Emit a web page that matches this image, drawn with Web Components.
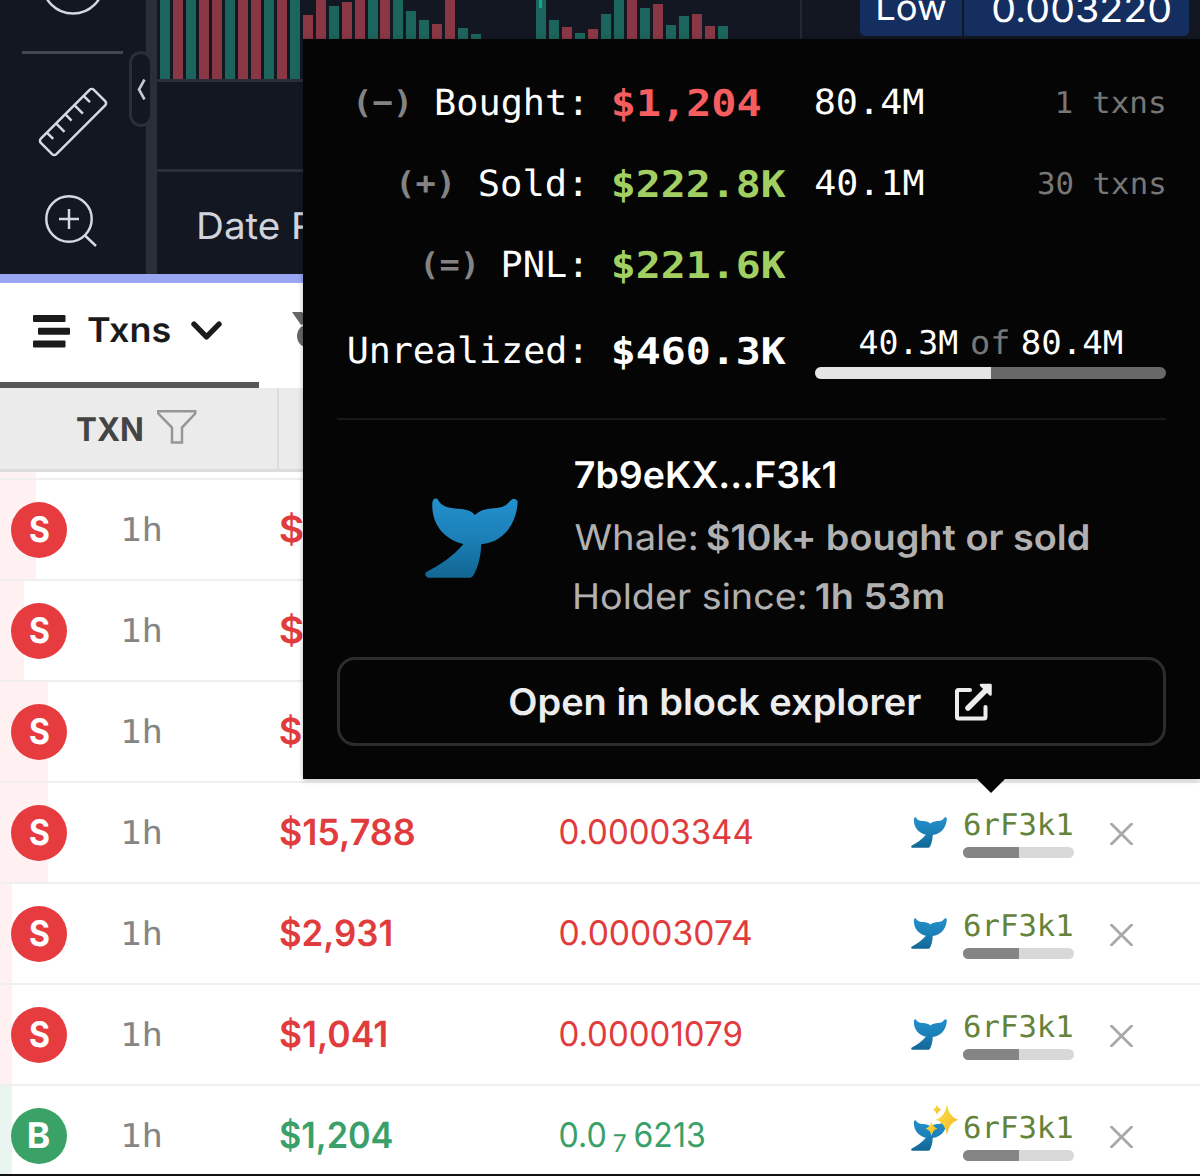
<!DOCTYPE html>
<html lang="en">
<head>
<meta charset="utf-8">
<title>Txns</title>
<style>
  html, body { margin: 0; }
  body { width: 1200px; height: 1176px; overflow: hidden; background: #fff; font-family: Inter, "Open Sans", sans-serif; }
</style>
</head>
<body>
<trade-page></trade-page>

<script>
const MONO = '"DejaVu Sans Mono", "Liberation Mono", monospace';
const ctx = document.createElement('canvas').getContext('2d');

// text sized by its cap height and drawn width
class InkText extends HTMLElement {
  connectedCallback() {
    if (this.shadowRoot) return;
    this.attachShadow({ mode: 'open' }).innerHTML = `
      <style>
        :host { display: block; flex: none; }
        span { display: block; width: max-content; white-space: pre; transform-origin: 0 0; text-rendering: geometricPrecision; }
      </style>
      <span><slot></slot></span>`;
    const cs = getComputedStyle(this);
    const cap = +this.getAttribute('cap');
    const w = +this.getAttribute('w');
    // measured large, glyph bounds are rounded to whole pixels
    ctx.font = `${cs.fontWeight} 400px ${cs.fontFamily}`;
    const size = cap / (ctx.measureText('H').actualBoundingBoxAscent / 400);
    const k = size / 400;
    const m = ctx.measureText(this.textContent);
    const base = (cap + (m.fontBoundingBoxAscent - m.fontBoundingBoxDescent) * k) / 2;
    const span = this.shadowRoot.querySelector('span');
    this.style.width = w + 'px';
    this.style.height = cap + 'px';
    span.style.fontSize = size + 'px';
    span.style.lineHeight = cap + 'px';
    const drawn = span.getBoundingClientRect().width / m.width;
    const scale = w / ((m.actualBoundingBoxLeft + m.actualBoundingBoxRight) * drawn);
    span.style.transform = `translate(${m.actualBoundingBoxLeft * drawn * scale}px, ${cap - base}px) scaleX(${scale})`;
  }
}
customElements.define('ink-text', InkText);

class WhaleTail extends HTMLElement {
  connectedCallback() {
    this.attachShadow({ mode: 'open' }).innerHTML = `
      <style>
        :host { display: block; flex: none; }
        svg { display: block; width: 100%; height: 100%; overflow: visible; }
      </style>
      <svg viewBox="74 174 280 240" preserveAspectRatio="none">
        <defs>
          <linearGradient id="g" x1="0" y1="0" x2="0" y2="1">
            <stop offset="0" stop-color="#2490cc"/><stop offset=".5" stop-color="#1b80b7"/><stop offset="1" stop-color="#126693"/>
          </linearGradient>
          <linearGradient id="y" x1="0" y1="0" x2="1" y2="1">
            <stop offset="0" stop-color="#ffe34d"/><stop offset="1" stop-color="#efb51b"/>
          </linearGradient>
        </defs>
        <path fill="url(#g)" d="M96 190Q97 173 111 176C126 204 148 204 184 207Q213 210 224 225Q240 209 268 206C300 204 316 202 330 183Q344 169 353 184C352 235 322 306 243 313C243 350 232 385 222 402Q217 413 208 413H83Q69 405 78 396C118 376 160 348 190 312C135 300 93 255 96 190Z"/>
        ${this.hasAttribute('sparkle') ? `
          <g fill="url(#y)">
            <path d="M354 52Q366 150 442 173Q366 194 354 294Q339 194 268 173Q339 150 354 52Z"/>
            <path d="M234 184Q243 230 281 240Q243 250 234 298Q225 250 187 240Q225 230 234 184Z"/>
            <path d="M276 54Q283 84 309 94Q283 104 276 136Q269 104 243 94Q269 84 276 54Z"/>
          </g>` : ''}
      </svg>`;
  }
}
customElements.define('whale-tail', WhaleTail);

class HoldBar extends HTMLElement {
  connectedCallback() {
    this.attachShadow({ mode: 'open' }).innerHTML = `
      <style>
        :host { display: block; overflow: hidden; border-radius: 6px; background: var(--rest, #d8d8d8); }
        div { height: 100%; width: var(--held, 50.5%); background: var(--fill, #858585); }
      </style>
      <div></div>`;
  }
}
customElements.define('hold-bar', HoldBar);

class ToolBar extends HTMLElement {
  connectedCallback() {
    this.attachShadow({ mode: 'open' }).innerHTML = `
      <style>
        :host { display: flex; flex-direction: column; width: 146px; height: 274px; background: #131722; overflow: hidden; }
        svg { display: block; fill: none; stroke: #d5d8e2; stroke-width: 2.5; }
        hr { width: 101px; height: 3px; margin: 36px 0 0 22px; border: 0; background: #434651; }
        .ring { margin-left: 41px; }
        .ruler { margin: 33px 0 0 38px; }
        .zoom { margin: 37px 0 0 44px; }
      </style>
      <svg class="ring" width="64" height="15"><circle cx="32" cy="-17" r="30.5"/></svg>
      <hr>
      <svg class="ruler" width="70" height="70" viewBox="0 0 70 70">
        <g transform="rotate(-45 35 35)">
          <rect x="-2.5" y="24" width="75" height="22" rx="3"/>
          <path d="M9 24v9M22 24v12M35 24v9M48 24v12M61 24v9"/>
        </g>
      </svg>
      <svg class="zoom" width="54" height="54" viewBox="0 0 54 54">
        <circle cx="25" cy="25" r="22.7"/><path d="M15 25h20M25 15v20M41.5 42L52 52"/>
      </svg>`;
  }
}
customElements.define('tool-bar', ToolBar);

// volume bars: colour + top edge, "-" is an empty slot
const VOLUME = ('G0 R0 G0 R0 R0 G0 R0 R0 G0 R0 G0 R15 R0 G6 R2 R0 G0 R0 G0 G11 G20 R24 R0 G28 G34 - - - - ' +
  'G0 G20 R27 G33 R29 G14 G0 R0 G8 R4 G25 G16 R14 R26 G26').split(' ');

class PriceChart extends HTMLElement {
  connectedCallback() {
    this.attachShadow({ mode: 'open' }).innerHTML = `
      <style>
        :host { display: flex; flex-direction: column; flex: 1; height: 274px; background: #131722; color: #d1d4dc; position: relative; overflow: hidden; }
        .bars { display: flex; align-items: flex-end; gap: 2.97px; height: 79px; padding-left: 3px; border-bottom: 3px solid #2a2e39; box-sizing: content-box; }
        i { flex: none; width: 10px; }
        .G { background: #1c655c; }
        .R { background: #893744; }
        .blank { height: 87px; border-bottom: 3px solid #2a2e39; }
        .foot { display: flex; gap: 15px; padding: 40px 0 0 42px; }
        .low { position: absolute; left: 703px; top: 0; display: flex; gap: 2px; color: #fff; }
        .low div { height: 36px; background: #152e60; }
        .low div:first-child { width: 84px; padding-left: 18px; border-bottom-left-radius: 5px; }
        .low div:last-child { width: 196px; padding-left: 29px; border-bottom-right-radius: 5px; }
        .low ink-text { margin-top: -5px; }
        .grid { position: absolute; top: 0; left: 643px; width: 2px; height: 80px; background: #242833; }
        .tick { position: absolute; top: 0; left: 382px; width: 3px; height: 8px; background: #12a88a; }
      </style>
      <div class="bars">${VOLUME.map((v) => v === '-' ? '<i></i>'
        : `<i class="${v[0]}" style="height:${79 - v.slice(1)}px"></i>`).join('')}</div>
      <div class="blank"></div>
      <div class="foot"><ink-text cap="27" w="80">Date</ink-text><ink-text cap="27" w="117">Range</ink-text></div>
      <div class="grid"></div><div class="tick"></div>
      <div class="low">
        <div><ink-text cap="26" w="68">Low</ink-text></div>
        <div><ink-text cap="27" w="177">0.003220</ink-text></div>
      </div>`;
  }
}
customElements.define('price-chart', PriceChart);

class TxnTabs extends HTMLElement {
  connectedCallback() {
    this.attachShadow({ mode: 'open' }).innerHTML = `
      <style>
        :host { display: block; }
        .tabs { display: flex; height: 105px; background: #fff; color: #1b1b1b; }
        .tab { display: flex; align-items: center; box-sizing: border-box; width: 259px; padding: 0 0 3px 33px; border-bottom: 6px solid #575757; font-weight: 600; }
        .tab ink-text { margin: -1px 21px 0 18px; }
        .medal { margin: 29px 0 0 33px; }
        .head { display: flex; height: 81px; background: #ebebeb; border-bottom: 3px solid #dcdcdc; color: #444; font-weight: 700; }
        .cell { display: flex; align-items: center; gap: 15px; width: 200px; padding-left: 77px; border-right: 2px solid #dcdcdc; }
        .cell svg { margin-top: -2px; }
        svg { display: block; }
      </style>
      <div class="tabs">
        <div class="tab">
          <svg width="37" height="33" fill="#1b1b1b"><rect y="0" width="32.5" height="7" rx="1"/><rect x="5" y="12.7" width="32" height="7" rx="1"/><rect y="25.5" width="32.5" height="7" rx="1"/></svg>
          <ink-text cap="25" w="82">Txns</ink-text>
          <svg width="31" height="20" fill="none" stroke="#1b1b1b" stroke-width="5.4" stroke-linecap="round" stroke-linejoin="round"><path d="M3 3.2L15.5 15.8L28 3.2"/></svg>
        </div>
        <svg class="medal" width="36" height="36" fill="#676767"><path d="M0 0h10l8 10-9 3z"/><circle cx="17" cy="24" r="12"/><circle cx="17" cy="24" r="6" fill="#9a9a9a"/></svg>
      </div>
      <div class="head">
        <div class="cell">
          <ink-text cap="24" w="65">TXN</ink-text>
          <svg width="40" height="35" fill="none" stroke="#969696" stroke-width="2.5"><path d="M1.3 1.3H38.2V3.6L25 17.6V32.5H15V17.6L1.3 3.6Z"/></svg>
        </div>
      </div>`;
  }
}
customElements.define('txn-tabs', TxnTabs);

class TxnRow extends HTMLElement {
  connectedCallback() {
    const side = this.getAttribute('side');
    const [usd, usdW] = this.getAttribute('usd').split('|');
    const price = this.getAttribute('price').split(' ');
    const [text, tint] = side === 'B' ? ['#3aa06a', 'rgba(58,160,106,.10)'] : ['#e03c3e', 'rgba(255,70,70,.075)'];
    this.attachShadow({ mode: 'open' }).innerHTML = `
      <style>
        :host { display: grid; grid-template-columns: 124px 155.5px 280px 351.5px 52px 147px 1fr; align-items: center; height: 99px; border-bottom: 2px solid #efefef; color: ${text};
          background: linear-gradient(${tint}, ${tint}) 0 0 / ${this.getAttribute('tint')}px 100% no-repeat border-box; }
        .side { display: flex; align-items: center; justify-content: center; width: 56px; height: 56px; margin-left: 11px; border-radius: 50%; background: ${side === 'B' ? '#3aa267' : '#e63c40'}; color: #fff; font-weight: 700; }
        .age { margin-top: -2px; color: #858585; font-family: ${MONO}; }
        .usd { font-weight: 600; }
        .price { display: flex; align-items: center; gap: 9px; }
        .sub { margin-top: 15px; }
        whale-tail { width: 36px; height: 31px; }
        .holder { display: flex; flex-direction: column; gap: 11px; margin-top: 7px; width: 110px; color: #64833a; font-family: ${MONO}; }
        .holder ink-text { margin-left: 1.5px; }
        hold-bar { height: 11px; width: 111px; }
        svg { display: block; margin-top: 2px; }
      </style>
      <div class="side"><ink-text cap="26" w="${side === 'B' ? 20 : 19}">${side}</ink-text></div>
      <ink-text class="age" cap="24" w="36">1h</ink-text>
      <ink-text class="usd" cap="26.5" w="${usdW}">${usd}</ink-text>
      <div class="price">${price.map((p, i) => {
        const [t, w] = p.split('|');
        return `<ink-text ${price.length > 1 && i === 1 ? 'class="sub" cap="18"' : 'cap="25"'} w="${w}">${t}</ink-text>`;
      }).join('')}</div>
      <whale-tail ${this.hasAttribute('fresh') ? 'sparkle' : ''}></whale-tail>
      <div class="holder"><ink-text cap="22" w="107">6rF3k1</ink-text><hold-bar></hold-bar></div>
      <svg width="23" height="22" stroke="#a9a9a9" stroke-width="2.8"><path d="M.5 0L22.500 22M22.500 0L.5 22"/></svg>`;
  }
}
customElements.define('txn-row', TxnRow);

class PnlRow extends HTMLElement {
  connectedCallback() {
    const sign = this.getAttribute('sign');
    const [label, labelW] = this.getAttribute('label').split('|');
    const [value, valueW] = this.getAttribute('value').split('|');
    this.attachShadow({ mode: 'open' }).innerHTML = `
      <style>
        :host { display: grid; grid-template-columns: 244px 33px 201px 351px; align-items: center; height: 81px; color: #fff; font-family: ${MONO}; }
        .label { display: flex; justify-content: flex-end; align-items: center; gap: 30px; }
        .sign { color: #838383; font-weight: 700; }
        .value { grid-column: 3; font-weight: 700; color: ${this.getAttribute('color')}; }
      </style>
      <div class="label">
        ${sign ? `<ink-text class="sign" cap="23" w="49">(${sign})</ink-text>` : ''}
        <ink-text cap="26.5" w="${labelW}">${label}:</ink-text>
      </div>
      <ink-text class="value" cap="27" w="${valueW}">${value}</ink-text>
      <slot></slot>`;
  }
}
customElements.define('pnl-row', PnlRow);

class HolderCard extends HTMLElement {
  connectedCallback() {
    this.attachShadow({ mode: 'open' }).innerHTML = `
      <style>
        :host { display: block; position: absolute; left: 303px; top: 39px; width: 829px; height: 717px; padding: 23px 34px 0; background: #050505; color: #fff; box-shadow: 0 1px 5px rgba(0,0,0,.28); }
        :host::after { content: ""; position: absolute; left: 674px; top: 740px; border: 14px solid transparent; border-top-color: #050505; border-bottom: 0; }
        .amount { display: flex; align-items: center; justify-content: space-between; font-family: ${MONO}; padding: 0 2.5px 0 1px; }
        .dim { color: #777; }
        .last { height: 90px; }
        .hold { font-family: ${MONO}; margin-top: 9px; }
        .of { display: flex; gap: 15px; justify-content: center; margin-bottom: 13px; }
        hold-bar { height: 12px; --fill: #e5e5e5; --rest: #686868; --held: 50%; }
        hr { height: 2px; margin: 23px 0 42px; border: 0; background: #191919; }
        .who { display: flex; height: 195px; }
        .who whale-tail { width: 93px; height: 80px; margin: 36px 57px 0 88px; }
        .lines { display: flex; flex-direction: column; color: #b1b1b1; }
        .line { display: flex; gap: 11px; }
        b { font-weight: 600; }
        .name { color: #fff; font-weight: 600; margin: -1px 0 37px; }
        .line + .line { margin-top: 33px; }
        button { display: flex; align-items: center; justify-content: center; gap: 34px; width: 829px; height: 89px; padding: 0; border: 3px solid #2c2c2c; border-radius: 18px; background: none; color: #ededed; font: inherit; font-weight: 600; }
      </style>
      <pnl-row sign="−" label="Bought|144" value="$1,204|146" color="#f55d5f">
        <div class="amount"><ink-text cap="25.5" w="107">80.4M</ink-text><ink-text class="dim" cap="22" w="106">1 txns</ink-text></div>
      </pnl-row>
      <pnl-row sign="+" label="Sold|101" value="$222.8K|172" color="#a2cf62">
        <div class="amount"><ink-text cap="25.5" w="107">40.1M</ink-text><ink-text class="dim" cap="22" w="125">30 txns</ink-text></div>
      </pnl-row>
      <pnl-row sign="=" label="PNL|77" value="$221.6K|172" color="#a2cf62"></pnl-row>
      <pnl-row class="last" label="Unrealized|232" value="$460.3K|172" color="#fff">
        <div class="hold">
          <div class="of"><ink-text cap="24" w="97">40.3M</ink-text><ink-text class="dim" cap="24" w="36">of</ink-text><ink-text cap="24" w="99">80.4M</ink-text></div>
          <hold-bar></hold-bar>
        </div>
      </pnl-row>
      <hr>
      <div class="who">
        <whale-tail></whale-tail>
        <div class="lines">
          <ink-text class="name" cap="27" w="260">7b9eKX...F3k1</ink-text>
          <div class="line"><ink-text cap="26" w="121">Whale:</ink-text><b><ink-text cap="26" w="381">$10k+ bought or sold</ink-text></b></div>
          <div class="line"><ink-text cap="26" w="230">Holder since:</ink-text><b><ink-text cap="26" w="127">1h 53m</ink-text></b></div>
        </div>
      </div>
      <button>
        <ink-text cap="27" w="411">Open in block explorer</ink-text>
        <svg width="38" height="38" fill="none" stroke="#ededed" stroke-width="4" stroke-linecap="round" stroke-linejoin="round">
          <path d="M15 7H3.5Q2 7 2 8.500V34Q2 35.500 3.500 35.500H29Q30.500 35.500 30.500 34V24"/>
          <path d="M13 25L32 6" stroke-width="5.5"/><path d="M26 2H35.500V11.500Z" fill="#ededed" stroke-width="2.500"/>
        </svg>
      </button>`;
  }
}
customElements.define('holder-card', HolderCard);

class TradePage extends HTMLElement {
  connectedCallback() {
    this.attachShadow({ mode: 'open' }).innerHTML = `
      <style>
        :host { display: block; position: relative; width: 1200px; height: 1176px; overflow: hidden; background: #fff; }
        .top { display: flex; height: 274px; border-bottom: 9px solid #98a6f3; }
        .split { width: 11px; background: #2a2e39; }
        .collapse { position: absolute; left: 129px; top: 51px; box-sizing: border-box; width: 24px; height: 76px; border: 3px solid #2a2e39; border-radius: 12px; background: #131722; }
        .collapse svg { display: block; margin: 25px 0 0 5px; }
        .gap { height: 6px; border-bottom: 2px solid #efefef; background: linear-gradient(#fff2f2, #fff2f2) 0 0 / 36px 100% no-repeat border-box; }
        .end { position: absolute; left: 0; right: 0; bottom: 0; height: 2px; background: #111; }
      </style>
      <div class="top"><tool-bar></tool-bar><div class="split"></div><price-chart></price-chart></div>
      <txn-tabs></txn-tabs>
      <div class="gap"></div>
      <txn-row side="S" tint="36" usd="$11,310|134" price="0.00003512|192"></txn-row>
      <txn-row side="S" tint="24" usd="$1,127|112" price="0.00003481|192"></txn-row>
      <txn-row side="S" tint="48" usd="$15,902|139" price="0.00003420|192"></txn-row>
      <txn-row side="S" tint="48" usd="$15,788|134" price="0.00003344|192"></txn-row>
      <txn-row side="S" tint="12" usd="$2,931|111" price="0.00003074|191"></txn-row>
      <txn-row side="S" tint="12" usd="$1,041|106" price="0.00001079|181"></txn-row>
      <txn-row side="B" tint="12" usd="$1,204|112" price="0.0|45 7|12 6213|69" fresh></txn-row>
      <div class="end"></div>
      <div class="collapse"><svg width="9" height="21" fill="none" stroke="#c5c8d1" stroke-width="2.6"><path d="M7.500 0.500L2 10.500L7.500 20.500"/></svg></div>
      <holder-card></holder-card>`;
  }
}
customElements.define('trade-page', TradePage);
</script>
</body>
</html>
